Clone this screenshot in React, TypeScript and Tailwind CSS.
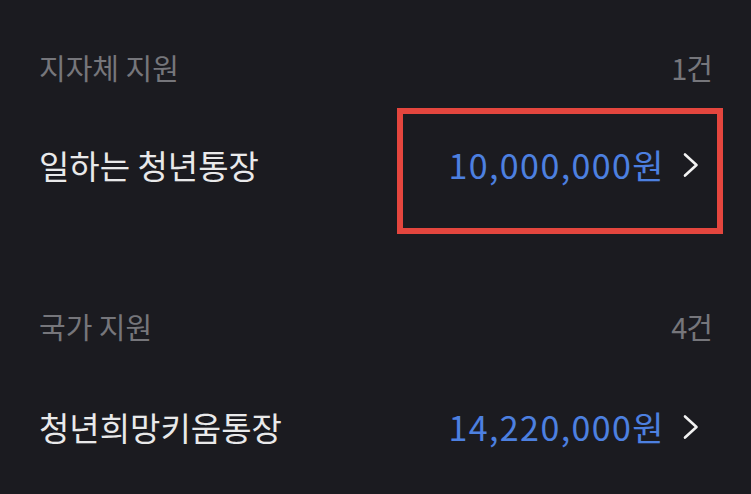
import React from "react";

function Chevron() {
  return (
    <svg width="18" height="26" viewBox="0 0 18 26" fill="none" className="shrink-0">
      <path d="M3 2.5 L14.5 13 L3 23.5" stroke="#f2f2f2" strokeWidth="2.6" strokeLinecap="round" strokeLinejoin="round" />
    </svg>
  );
}

function Header({ title, count }: { title: string; count: string }) {
  return (
    <div className="flex items-center justify-between h-[50px] text-[29px] text-[#76767b] leading-none">
      <span>{title}</span>
      <span className="tracking-[-1px]">{count}</span>
    </div>
  );
}

function Item({ name, amount, boxed }: { name: string; amount: string; boxed?: boolean }) {
  return (
    <div className="flex items-center justify-between h-[70px] leading-none">
      <span className="text-[33px] text-[#e9e9ea]">{name}</span>
      <div className="relative flex items-center gap-[17px] pr-[12px]">
        <span className="text-[34px] text-[#4d80e0] tracking-[1.4px]">{amount}</span>
        <Chevron />
        {boxed && (
          <div className="absolute left-[-51px] right-[-11px] top-[-40px] bottom-[-52px] border-[6px] border-[#e4463e]" />
        )}
      </div>
    </div>
  );
}

export default function App() {
  return (
    <div
      className="w-[751px] h-[494px] bg-[#1b1b20] px-[39px] pt-[42px] overflow-hidden"
      style={{ fontFamily: '"Noto Sans CJK KR", "Noto Sans", sans-serif' }}
    >
      <Header title="지자체 지원" count="1건" />
      <div className="h-[38px]" />
      <Item name="일하는 청년통장" amount="10,000,000원" boxed />
      <div className="h-[101px]" />
      <Header title="국가 지원" count="4건" />
      <div className="h-[41px]" />
      <Item name="청년희망키움통장" amount="14,220,000원" />
    </div>
  );
}
